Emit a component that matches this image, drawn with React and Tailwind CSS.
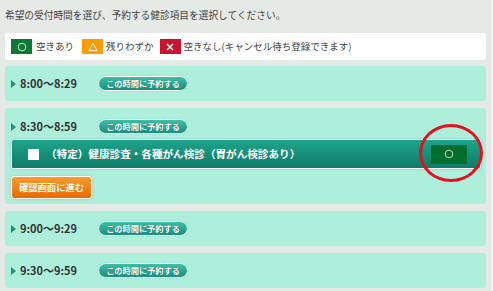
import React from "react";

const font = { fontFamily: '"Noto Sans CJK JP", "Noto Sans", sans-serif' };

function Tri() {
  return (
    <svg width="5" height="8" viewBox="0 0 5 8" className="shrink-0">
      <polygon points="0,0 5,4 0,8" fill="#1f8f80" />
    </svg>
  );
}

function ReserveBtn() {
  return (
    <div className="w-[90px] h-[15px] rounded-full border border-white bg-gradient-to-b from-[#3cc0a6] to-[#15907a] shadow-[0_0_1px_#4a9] flex items-center justify-center">
      <span className="text-white font-bold text-[8.2px] leading-none [text-shadow:0_0_1px_#0a6a5a]">この時間に予約する</span>
    </div>
  );
}

function TimeRow({ time }) {
  return (
    <div className="flex items-center h-[15px]">
      <Tri />
      <span className="ml-[4px] w-[78px] text-[11px] font-bold text-[#333] leading-none">{time}</span>
      <ReserveBtn />
    </div>
  );
}

function Card({ time }) {
  return (
    <div className="h-[35px] bg-[#aeefdc] rounded-[3px] flex items-center pl-[6px]">
      <TimeRow time={time} />
    </div>
  );
}

export default function App() {
  return (
    <div className="relative w-[493px] h-[291px] overflow-hidden bg-[#e6eae6] flex" style={font}>
      <div className="w-[491px] px-[5px] pt-[8px]">
        <p className="text-[9.7px] leading-[14px] text-[#444] h-[14px]">希望の受付時間を選び、予約する健診項目を選択してください。</p>
        <div className="mt-[11px] h-[27px] bg-white rounded-[3px] flex items-center pl-[6px] text-[9.5px] text-[#444]">
          <div className="w-[21px] h-[15px] bg-[#0a7a36] flex items-center justify-center">
            <svg width="10" height="10" viewBox="0 0 10 10"><circle cx="5" cy="5" r="3.8" fill="none" stroke="#cfe8d2" strokeWidth="1" /></svg>
          </div>
          <span className="ml-[4px]">空きあり</span>
          <div className="ml-[8px] w-[21px] h-[15px] bg-[#ff9a00] flex items-center justify-center">
            <svg width="10" height="10" viewBox="0 0 10 10"><polygon points="5,1.2 9,8.6 1,8.6" fill="none" stroke="#fff" strokeWidth="1" /></svg>
          </div>
          <span className="ml-[3px]">残りわずか</span>
          <div className="ml-[6px] w-[21px] h-[15px] bg-[#c8142c] flex items-center justify-center">
            <svg width="10" height="10" viewBox="0 0 10 10"><path d="M2 2 L8 8 M8 2 L2 8" stroke="#fff" strokeWidth="1.5" /></svg>
          </div>
          <span className="ml-[3px]">空きなし(キャンセル待ち登録できます)</span>
        </div>

        <div className="mt-[6px] flex flex-col gap-[7px]">
          <Card time="8:00～8:29" />
          <div className="h-[96px] bg-[#aeefdc] rounded-[3px] pt-[11px] px-[6px] pr-[5px]">
            <TimeRow time="8:30～8:59" />
            <div className="mt-[5px] h-[30px] rounded-[2px] border border-white bg-gradient-to-b from-[#1fa48c] to-[#0e7b68] shadow-[0_0_2px_#6bb] flex items-center pl-[16px] pr-[13px]">
              <div className="w-[11px] h-[11px] bg-white shrink-0" />
              <span className="ml-[7px] text-white font-bold text-[10.6px] leading-none whitespace-nowrap">（特定）健康診査・各種がん検診（胃がん検診あり）</span>
              <div className="ml-auto w-[36px] h-[19px] bg-[#006f2e] flex items-center justify-center">
                <svg width="10" height="10" viewBox="0 0 10 10"><circle cx="5" cy="5" r="3.8" fill="none" stroke="#b9dcbc" strokeWidth="1" /></svg>
              </div>
            </div>
            <div className="mt-[7px] w-[81px] h-[23px] rounded-[3px] border border-white bg-gradient-to-b from-[#f89c2c] to-[#e86800] shadow-[0_0_2px_#c96] flex items-center justify-center">
              <span className="text-white font-bold text-[9.3px] leading-none">確認画面に進む</span>
            </div>
          </div>
          <Card time="9:00～9:29" />
          <Card time="9:30～9:59" />
        </div>
      </div>
      <div className="w-[2px] bg-[#f2f2f2]" />
      <div className="absolute left-[419px] top-[124px] w-[64px] h-[58px] rounded-[50%] border-[3px] border-[#e5101c]" />
    </div>
  );
}
